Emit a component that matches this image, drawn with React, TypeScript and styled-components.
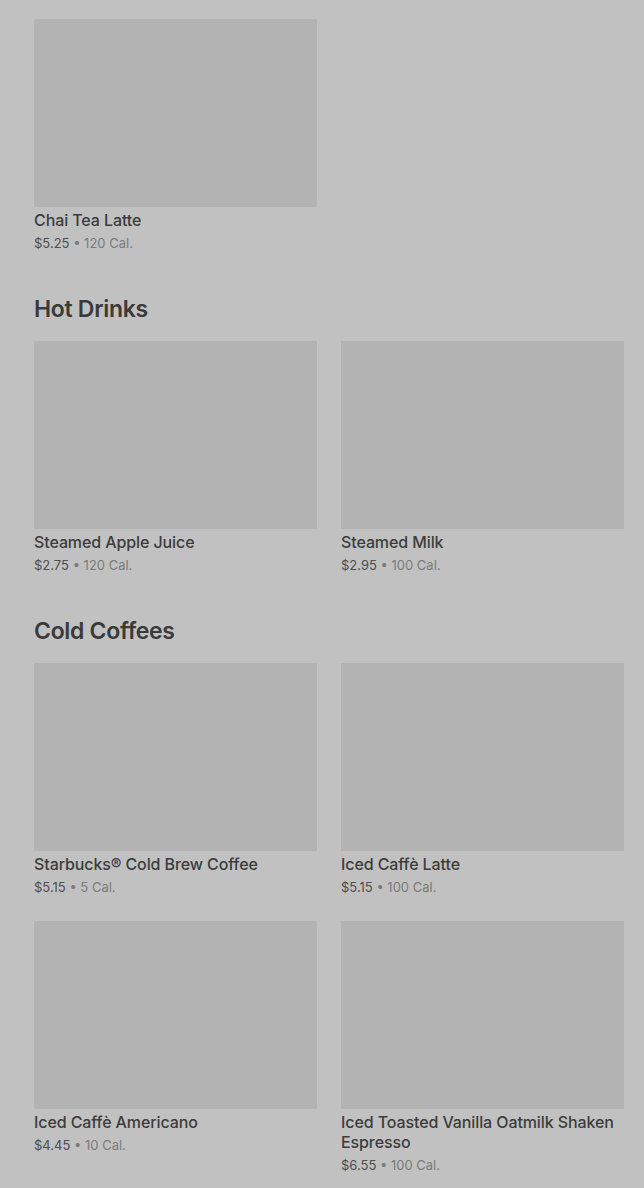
import React from "react";
import styled, { createGlobalStyle } from "styled-components";

const Global = createGlobalStyle`
  html, body { margin: 0; padding: 0; background: #c1c1c1; }
  body { font-family: Inter, "Noto Sans", "Liberation Sans", sans-serif; }
`;

const Page = styled.div`
  background: #c1c1c1;
  padding: 19px 20px 0 34px;
  min-height: 1188px;
  box-sizing: border-box;
`;

const Section = styled.section`
  display: flex;
  flex-direction: column;
  padding-bottom: 41px;
`;

const Heading = styled.h2`
  margin: 0 0 16px;
  font-family: Inter, "Liberation Sans", sans-serif;
  font-size: 23px;
  line-height: 32px;
  font-weight: 600;
  letter-spacing: -0.3px;
  color: #3a3a3a;
`;

const Grid = styled.div`
  display: grid;
  grid-template-columns: 283px 283px;
  column-gap: 24px;
  row-gap: 25px;
`;

const Card = styled.div`
  display: flex;
  flex-direction: column;
`;

const Thumb = styled.div`
  height: 188px;
  background: #b3b3b3;
  margin-bottom: 3px;
`;

const Title = styled.div`
  font-size: 16px;
  line-height: 20px;
  font-weight: 500;
  color: #3c3c3c;
  letter-spacing: -0.1px;
`;

const Meta = styled.div`
  margin-top: 4px;
  font-size: 13px;
  line-height: 18px;
  color: #7b7b7b;
`;

const Price = styled.span`
  color: #4e4e4e;
`;

type Item = { name: string; price: string; cal: string };

const sections: { title?: string; items: Item[] }[] = [
  { items: [{ name: "Chai Tea Latte", price: "$5.25", cal: "120 Cal." }] },
  {
    title: "Hot Drinks",
    items: [
      { name: "Steamed Apple Juice", price: "$2.75", cal: "120 Cal." },
      { name: "Steamed Milk", price: "$2.95", cal: "100 Cal." },
    ],
  },
  {
    title: "Cold Coffees",
    items: [
      { name: "Starbucks® Cold Brew Coffee", price: "$5.15", cal: "5 Cal." },
      { name: "Iced Caffè Latte", price: "$5.15", cal: "100 Cal." },
      { name: "Iced Caffè Americano", price: "$4.45", cal: "10 Cal." },
      { name: "Iced Toasted Vanilla Oatmilk Shaken Espresso", price: "$6.55", cal: "100 Cal." },
    ],
  },
];

export default function App() {
  return (
    <>
      <Global />
      <Page>
        {sections.map((s, i) => (
          <Section key={i}>
            {s.title && <Heading>{s.title}</Heading>}
            <Grid>
              {s.items.map((it) => (
                <Card key={it.name}>
                  <Thumb />
                  <Title>{it.name}</Title>
                  <Meta>
                    <Price>{it.price}</Price> • {it.cal}
                  </Meta>
                </Card>
              ))}
            </Grid>
          </Section>
        ))}
      </Page>
    </>
  );
}
